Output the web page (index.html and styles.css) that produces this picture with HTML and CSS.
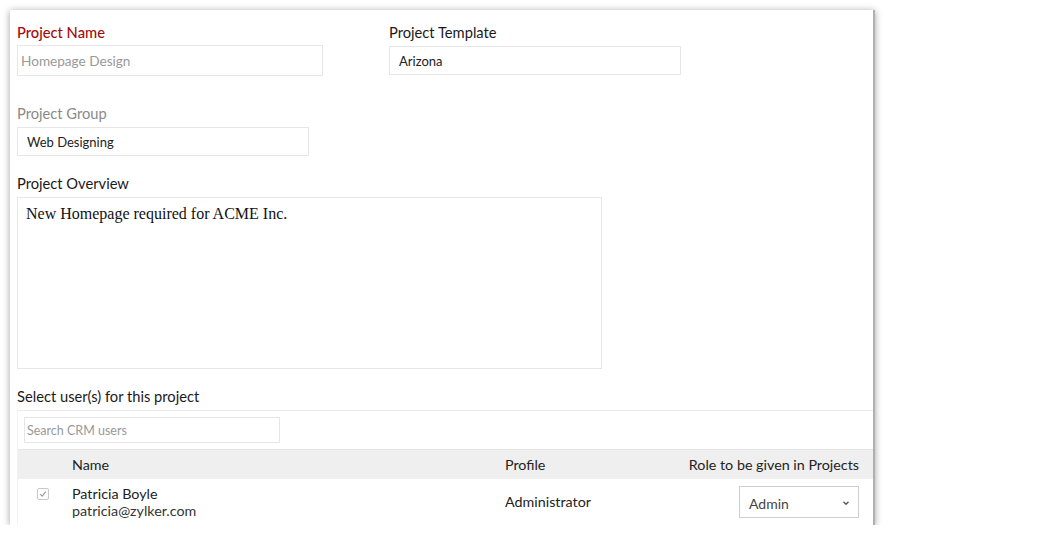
FILE: index.html
```html
<!DOCTYPE html>
<html>
<head>
<meta charset="utf-8">
<link rel="stylesheet" href="styles.css">
</head>
<body>
<div class="panel">
  <div class="top-row">
    <div class="field col-left">
      <div class="label label-red">Project Name</div>
      <div class="input input-name placeholder">Homepage Design</div>
    </div>
    <div class="field col-right">
      <div class="label">Project Template</div>
      <div class="input input-template">Arizona</div>
    </div>
  </div>
  <div class="field group-field">
    <div class="label label-gray">Project Group</div>
    <div class="input input-group">Web Designing</div>
  </div>
  <div class="field overview-field">
    <div class="label">Project Overview</div>
    <div class="textarea">New Homepage required for ACME Inc.</div>
  </div>
  <div class="label users-label">Select user(s) for this project</div>
  <div class="users">
    <div class="search-bar">
      <div class="search">Search CRM users</div>
    </div>
    <div class="thead">
      <div class="c-check"></div>
      <div class="c-name">Name</div>
      <div class="c-profile">Profile</div>
      <div class="c-role">Role to be given in Projects</div>
    </div>
    <div class="trow">
      <div class="c-check"><span class="checkbox"><svg width="8" height="8" viewBox="0 0 8 8"><path d="M1.2 4.2 L3.2 6.2 L6.8 1.6" fill="none" stroke="#9a9a9a" stroke-width="1.1"/></svg></span></div>
      <div class="c-name">
        <div class="uname">Patricia Boyle</div>
        <div class="umail">patricia@zylker.com</div>
      </div>
      <div class="c-profile">Administrator</div>
      <div class="c-role">
        <div class="select">Admin<svg width="8" height="6" viewBox="0 0 8 6"><path d="M1.5 1.8 L4 4.2 L6.5 1.8" fill="none" stroke="#555" stroke-width="1.4"/></svg></div>
      </div>
    </div>
  </div>
</div>
</body>
</html>
```
FILE: styles.css
```css
html, body {
  margin: 0;
  padding: 0;
  background: #ffffff;
}
body {
  font-family: Lato, "Liberation Sans", sans-serif;
  color: #222;
  padding: 10px 0 0 10px;
}
.panel {
  width: 865px;
  height: 515px;
  background: #fff;
  border-right: 2px solid #b0b0b0;
  box-shadow: 0 1px 7px rgba(0, 0, 0, 0.38);
  overflow: hidden;
  padding: 14px 0 0 7px;
  box-sizing: border-box;
}
.top-row {
  display: flex;
}
.col-left {
  width: 372px;
}
.label {
  font-size: 14.7px;
  line-height: 16px;
  color: #1a1a1a;
}
.label-red {
  color: #a30b0b;
  font-weight: 500;
}
.label-gray {
  color: #8a8a8a;
}
.input {
  box-sizing: border-box;
  border: 1px solid #e6e6e6;
  font-size: 13px;
  color: #222;
  display: flex;
  align-items: center;
}
.input-name {
  margin-top: 5px;
  width: 306px;
  height: 31px;
  padding-left: 3px;
  color: #999;
  font-size: 13.6px;
}
.input-template {
  margin-top: 6px;
  width: 292px;
  height: 29px;
  padding-left: 9px;
}
.group-field {
  margin-top: 29px;
}
.input-group {
  margin-top: 6px;
  width: 292px;
  height: 29px;
  padding-left: 9px;
}
.overview-field {
  margin-top: 19px;
}
.textarea {
  margin-top: 6px;
  box-sizing: border-box;
  width: 585px;
  height: 172px;
  border: 1px solid #e6e6e6;
  font-family: "Liberation Serif", serif;
  font-size: 16px;
  color: #111;
  padding: 7px 0 0 8px;
}
.users-label {
  margin-top: 19px;
}
.users {
  margin-top: 6px;
  border-top: 1px solid #ececec;
  border-left: 1px solid #f2f2f2;
}
.search-bar {
  padding: 6px 0 6px 6px;
}
.search {
  box-sizing: border-box;
  width: 256px;
  height: 26px;
  border: 1px solid #e6e6e6;
  font-size: 12.5px;
  color: #999;
  display: flex;
  align-items: center;
  padding-left: 2px;
}
.thead, .trow {
  display: flex;
  font-size: 14.3px;
  color: #222;
}
.thead {
  height: 30px;
  box-sizing: border-box;
  align-items: center;
  background: #efefef;
  border-top: 1px solid #e4e4e4;
}
.trow {
  height: 46px;
  align-items: flex-start;
  padding-top: 7px;
}
.c-check {
  width: 54px;
  display: flex;
  justify-content: flex-start;
  padding-left: 19px;
  box-sizing: border-box;
}
.c-name {
  width: 433px;
}
.c-profile {
  width: 150px;
}
.c-role {
  width: 204px;
  display: flex;
  justify-content: flex-end;
}
.trow .c-check {
  padding-top: 2px;
}
.checkbox {
  width: 10px;
  height: 10px;
  border: 1px solid #c8c8c8;
  border-radius: 2px;
  display: flex;
  align-items: center;
  justify-content: center;
}
.uname {
  line-height: 16px;
}
.umail {
  line-height: 17px;
  color: #333;
}
.trow .c-profile {
  padding-top: 7px;
}
.select {
  box-sizing: border-box;
  width: 120px;
  height: 32px;
  border: 1px solid #cfcfcf;
  display: flex;
  align-items: center;
  justify-content: space-between;
  padding: 2px 8px 0 9px;
  font-size: 14px;
  color: #444;
}
```
